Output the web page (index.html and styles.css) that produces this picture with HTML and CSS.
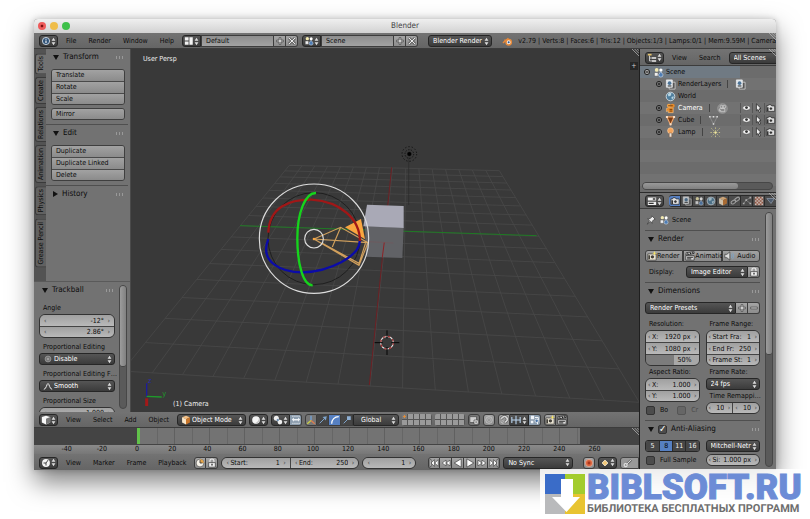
FILE: index.html
```html
<!DOCTYPE html>
<html lang="en">
<head>
<meta charset="utf-8">
<title>Blender</title>
<link rel="stylesheet" href="styles.css">
</head>
<body>
<svg class="sprite" aria-hidden="true">
  <symbol id="updn" viewBox="0 0 6 10"><path fill="#ddd" d="M3 .5 5.3 4H.7zM3 9.500.7 6h4.6z"/></symbol>
  <symbol id="info" viewBox="0 0 12 12"><circle cx="6" cy="6" r="4.300" fill="#2f5277" stroke="#dfe8f0"/><path stroke="#fff" stroke-width="1.300" d="M6 5.300v3.200M6 3.200v1.200"/></symbol>
  <symbol id="layout" viewBox="0 0 12 12"><path fill="#f2f2f2" d="M1 1.500h4.500v4H1zM1 6.500h4.500v4H1zM6.500 1.500h4v9h-4z"/></symbol>
  <symbol id="scene" viewBox="0 0 12 12"><path fill="#eee" stroke="#444" stroke-width=".5" d="M1.500 6h4v4h-4z"/><circle cx="4" cy="3.200" r="2" fill="#f1e8b0"/><circle cx="8.600" cy="3.300" r="1.800" fill="#fff"/><path fill="#4e7db5" stroke="#dce6f0" stroke-width=".6" d="M8.500 5 11 8.500a2.500 2.500 0 1 1-5 0z"/></symbol>
  <symbol id="plus" viewBox="0 0 12 12"><path fill="#eee" stroke="#333" stroke-width=".8" d="M5 2h2v3h3v2H7v3H5V7H2V5h3z"/></symbol>
  <symbol id="minus" viewBox="0 0 12 12"><path fill="#eee" stroke="#333" stroke-width=".8" d="M2 5h8v2H2z"/></symbol>
  <symbol id="cross" viewBox="0 0 12 12"><path fill="none" stroke="#333" stroke-width="3" d="m2.500 2.500 7 7m0-7-7 7"/><path stroke="#f2f2f2" stroke-width="1.400" d="m2.500 2.500 7 7m0-7-7 7"/></symbol>
  <symbol id="blender" viewBox="0 0 12 12"><path fill="none" stroke="#e88a3a" stroke-width="1.500" d="M1 7.500 7 2.500M2.500 4.500h5"/><circle cx="7.300" cy="6.800" r="2.900" fill="#f6f0ea" stroke="#e88a3a" stroke-width="1.600"/><circle cx="7.300" cy="6.800" r="1.100" fill="#2b5a94"/></symbol>
  <symbol id="tree" viewBox="0 0 12 12"><path fill="none" stroke="#ddd" d="M3 3v6.500h3M3 6h3"/><path fill="#e5c26a" d="M1 1h4.500v2H1z"/><path fill="#eee" d="M6 5h5v1.800H6zM6 8.600h5v1.800H6z"/></symbol>
  <symbol id="props" viewBox="0 0 12 12"><path fill="#eee" d="M1 1.800h10v3.700H1zM1 7h10v3.700H1z"/><path fill="#333" d="M7 2.800h3v1.600H7zM2 8h6v1.600H2z"/></symbol>
  <symbol id="layers" viewBox="0 0 12 12"><path fill="#555" stroke="#ddd" stroke-width=".8" d="M4.500 3.500h6.500v7.500H4.500z"/><path fill="#dfe6ec" stroke="#eee" stroke-width=".8" d="M1.500 1h6.500v8H1.500z"/><circle cx="5" cy="4.500" r="2" fill="#4c7396"/><path fill="#333" d="M3 7h4v1.200H3z"/></symbol>
  <symbol id="world" viewBox="0 0 12 12"><circle cx="6" cy="6" r="4.700" fill="#4e7d9c" stroke="#dfe7ec" stroke-width=".9"/><path fill="#b8d5e2" d="M3 4c1-2 3-2 4-1.500L6.500 5 4 6zM7 6.500l2.500-.8c0 2-1 3-2 3.500z"/></symbol>
  <symbol id="ocam" viewBox="0 0 12 12"><path fill="#e58b2c" stroke="#ffd09a" stroke-width=".5" d="M1.500 6 4 5h5v5.500H3.500V8.500L1.500 9.500z"/><circle cx="4.300" cy="3" r="2.200" fill="#f5a548"/><circle cx="8.300" cy="3" r="2.300" fill="#e58b2c"/><path stroke="#7a3d05" d="M5 7h3M5 8.800h3M3.500 3h5"/></symbol>
  <symbol id="dcam" viewBox="0 0 12 12"><circle cx="6" cy="6" r="5.300" fill="#898989" stroke="#aaa" stroke-width=".6"/><path fill="none" stroke="#d5d5d5" stroke-width=".8" d="M2.500 6.500 4 6h4.500v3.500H4V8l-1.500.8z"/><circle cx="5" cy="4" r="1.500" fill="none" stroke="#d5d5d5" stroke-width=".8"/><circle cx="8" cy="4" r="1.500" fill="none" stroke="#d5d5d5" stroke-width=".8"/></symbol>
  <symbol id="omesh" viewBox="0 0 12 12"><path fill="#7b3c14" stroke="#eea56c" stroke-width="1.200" d="M2 2h8L6 10.500z"/><path fill="#fbe0c8" d="M1 1h2.200v2.200H1zM8.800 1H11v2.200H8.800zM5 9h2.200v2.200H5z"/></symbol>
  <symbol id="dmesh" viewBox="0 0 12 12"><path fill="none" stroke="#999" stroke-width=".7" d="M2 2h8L6 10z"/><path fill="#ddd" d="M1.200 1.200h1.600v1.600H1.200zM9.200 1.200h1.600v1.600H9.200zM5.200 9h1.600v1.600H5.200zM5.200 1.200h1.600v1.600H5.200z"/></symbol>
  <symbol id="olamp" viewBox="0 0 12 12"><circle cx="6" cy="4" r="3.200" fill="#f3a45c" stroke="#ffd8b0" stroke-width=".6"/><path fill="#e8e0d8" stroke="#80522c" stroke-width=".5" d="M4.600 6.500h2.800V11H4.600z"/></symbol>
  <symbol id="dlamp" viewBox="0 0 12 12"><path stroke="#d1cb8a" stroke-width=".9" stroke-dasharray="1.500 1.500" d="m1.500 1.500 9 9m0-9-9 9M6 .5v11M.5 6h11"/><circle cx="6" cy="6" r="1.200" fill="#efe6a0"/></symbol>
  <symbol id="eye" viewBox="0 0 12 12"><path fill="#f4f4f4" stroke="#444" stroke-width=".6" d="M1 6c2.500-4 7.500-4 10 0-2.500 3.500-7.500 3.500-10 0z"/><circle cx="6" cy="5.500" r="1.700" fill="#333"/></symbol>
  <symbol id="ptr" viewBox="0 0 12 12"><path fill="#eee" stroke="#222" stroke-width=".9" d="M3.500 1 9 6.500 7 7l1.500 3.500-1.600.7-1.400-3.400-2 1.500z"/></symbol>
  <symbol id="rcam" viewBox="0 0 12 12"><path fill="#ddd" stroke="#222" stroke-width=".8" d="M1 3.500h2l.8-1.500h2.600l.8 1.500H11V10H1z"/><circle cx="6.500" cy="6.700" r="2" fill="#333" stroke="#fff" stroke-width=".7"/><path fill="#333" d="M1.600 5h2v4.500h-2z"/></symbol>
  <symbol id="ycam" viewBox="0 0 12 12"><path fill="#e9e3d2" stroke="#333" stroke-width=".8" d="M1 3.500h10V11H1z"/><circle cx="6.500" cy="7" r="2" fill="#43403a"/><path fill="#43403a" d="M1.600 5h2v5h-2z"/><path fill="#f5e46a" d="m9 0 .8 2 2 .6-2 .8L9 5.500l-.8-2.100-2-.8 2-.6z"/></symbol>
  <symbol id="clap" viewBox="0 0 12 12"><path fill="#ddd" stroke="#222" stroke-width=".8" d="M1 5.500h10V11H1zM1 4.800 1.500 2 11 .8v2z"/><path stroke="#222" stroke-width="1.200" d="m3 2 1 2.500m2-3 1 2.500m2-3 1 2.500M2.500 7.500h7M2.500 9.500h5"/></symbol>
  <symbol id="cube" viewBox="0 0 12 12"><path fill="#f3c086" d="m6 .8 4.700 2L6 5 1.300 2.800z"/><path fill="#fae6c8" d="M6 5v6.300L1.300 9V2.800z"/><path fill="#c9762b" d="M6 5v6.300L10.700 9V2.800z"/></symbol>
  <symbol id="wcube" viewBox="0 0 12 12"><path fill="#f8f8f8" d="M1 2.500 6 1l5 1.500V9l-5 2.500L1 9z"/><path fill="#777" d="M6 4.500 11 2.500V9l-5 2.500z"/></symbol>
  <symbol id="link" viewBox="0 0 12 12"><g fill="none" stroke="#bbb" stroke-width="1.300"><rect x="1" y="5.500" width="6" height="3.500" rx="1.700" transform="rotate(-35 4 7)"/><rect x="5.500" y="2.500" width="6" height="3.500" rx="1.700" transform="rotate(-35 8 4)"/></g></symbol>
  <symbol id="geo" viewBox="0 0 12 12"><path fill="none" stroke="#999" d="m2 9 3-4 5-3M5 5l5 4"/><path fill="#ccc" d="M1 8h2v2H1zM4 4h2v2H4zM9 1h2v2H9zM9 8h2v2H9z"/></symbol>
  <symbol id="check" viewBox="0 0 12 12"><path fill="#f1ddd3" d="M1 1h10v10H1z"/><path fill="#a75a43" d="M3 1h2v2H3zm4 0h2v2H7zM1 3h2v2H1zm4 0h2v2H5zm4 0h2v2H9zM3 5h2v2H3zm4 0h2v2H7zM1 7h2v2H1zm4 0h2v2H5zm4 0h2v2H9zM3 9h2v2H3zm4 0h2v2H7z"/></symbol>
  <symbol id="tria" viewBox="0 0 12 12"><path fill="#50627a" stroke="#aebdd0" stroke-width=".8" d="M1 3h9L6 9z"/></symbol>
  <symbol id="pin" viewBox="0 0 12 12"><path fill="#eee" stroke="#333" stroke-width=".8" d="m7 1 4 4-1.500.5-2 2V10L5.300 7.800 1.500 11 4.300 6.800 2 4.500h2.800l2-2z"/></symbol>
  <symbol id="spk" viewBox="0 0 12 12"><path fill="#ddd" stroke="#333" stroke-width=".8" d="M1 4h2.500L7 1v10L3.500 8H1z"/><path fill="none" stroke="#7ea3c4" stroke-width="1.100" d="M8.500 3.500c1.500 1.500 1.500 3.500 0 5M10 2c2.200 2.500 2.200 5.500 0 8"/></symbol>
  <symbol id="lock" viewBox="0 0 12 12"><path fill="none" stroke="#eee" stroke-width="1.300" d="M3.500 6V3.500a2.400 2.400 0 0 1 4.800 0V6"/><path fill="#eee" stroke="#333" stroke-width=".8" d="M2 5.500h8V11H2z"/><path fill="#555" d="M5 7h2v2H5z"/></symbol>
  <symbol id="ball" viewBox="0 0 12 12"><circle cx="6" cy="6" r="4.600" fill="#f6f6f6"/><path fill="#c3c3c3" d="M9.500 3.500a4.500 4.500 0 0 1-6 6.300C7 9.500 9.500 7 9.500 3.500z"/></symbol>
  <symbol id="pivot" viewBox="0 0 12 12"><circle cx="4" cy="3.800" r="3" fill="#eee"/><circle cx="8.300" cy="8.500" r="2.800" fill="#eee"/><circle cx="5.800" cy="6" r="1.500" fill="#47729c" stroke="#fff" stroke-width=".5"/></symbol>
  <symbol id="cent" viewBox="0 0 12 12"><path fill="#eef2f6" d="M1 5.500 3.500 3v1.700h5V3L11 5.500 8.500 8V6.500h-5V8z"/><path fill="none" stroke="#eef2f6" stroke-dasharray="1.500 1" d="M1.500 1.500h9M1.500 10h9"/></symbol>
  <symbol id="axes" viewBox="0 0 12 12"><path stroke="#74a6dd" stroke-width="1.500" d="M6 6.500V1"/><path stroke="#c8cf45" stroke-width="1.500" d="M6 6.500 1.500 10.500"/><path stroke="#df7d4e" stroke-width="1.500" d="m6 6.500 4.500 4"/></symbol>
  <symbol id="marr" viewBox="0 0 12 12"><path stroke="#7fa5cc" stroke-width="1.200" d="m2 10 6-6"/><path fill="#7fa5cc" d="m10.500 1.500-1 5-4-4z"/></symbol>
  <symbol id="marc" viewBox="0 0 12 12"><path fill="none" stroke="#fff" stroke-width="1.500" d="M2 10.500C2 5.500 5.500 2 10.500 2"/></symbol>
  <symbol id="mscl" viewBox="0 0 12 12"><path stroke="#7fa5cc" stroke-width="1.200" d="m2 10 6-6"/><path fill="#8fb0d4" d="M6 1.500h4.500V6H6z"/></symbol>
  <symbol id="lcam" viewBox="0 0 12 12"><path fill="#cfcfcf" stroke="#444" stroke-width=".8" d="M1 2h8v7H1z"/><path fill="#eee" stroke="#444" stroke-width=".8" d="M6 6h5v5H6z"/><circle cx="8.500" cy="8.500" r="1" fill="#555"/></symbol>
  <symbol id="ring" viewBox="0 0 12 12"><circle cx="6" cy="6" r="4" fill="none" stroke="#c4c4c4"/><circle cx="6" cy="6" r="2" fill="none" stroke="#b0b0b0"/></symbol>
  <symbol id="rdot" viewBox="0 0 12 12"><circle cx="6" cy="6" r="3.500" fill="#777" stroke="#999"/><circle cx="6" cy="6" r="1.200" fill="#aaa"/></symbol>
  <symbol id="mag" viewBox="0 0 12 12"><path fill="none" stroke="#555" stroke-width="3.400" d="m2.500 4.500 1.800-1.700a3.200 3.200 0 0 1 4.600 4.600L7.200 9"/><path fill="none" stroke="#d5d5d5" stroke-width="2" d="m2.500 4.500 1.800-1.700a3.200 3.200 0 0 1 4.600 4.600L7.200 9"/><path stroke="#ddd" d="m2.500 8 2.500 2.500M4.500 6.500 6 8"/></symbol>
  <symbol id="incr" viewBox="0 0 12 12"><path stroke="#b9d4ee" stroke-width="1.300" d="M1 2.500v7m5-8.500v10m5-8.500v7M1 6h10"/></symbol>
  <symbol id="snap" viewBox="0 0 12 12"><path fill="#f0f4f8" d="M1 1h4v4H1zM1 7h3v3H1z"/><path fill="none" stroke="#f0f4f8" stroke-width="1.200" d="M6 3h4v3M9 7v4"/><circle cx="8" cy="7" r="2" fill="#4772a6" stroke="#fff" stroke-width=".8"/></symbol>
  <symbol id="clock" viewBox="0 0 12 12"><circle cx="6" cy="6" r="4.700" fill="#f4f4f4"/><path fill="none" stroke="#333" stroke-width="1.100" d="M8.500 2.500 6 6v3M3 6h3"/></symbol>
  <symbol id="range" viewBox="0 0 12 12"><circle cx="6" cy="6" r="4.700" fill="#f6f2e8" stroke="#444" stroke-width=".8"/><path fill="#e7a64a" d="M6 6V1.500A4.500 4.500 0 0 1 10.500 6z"/><path fill="none" stroke="#333" d="M6 2.500V6h3"/></symbol>
  <symbol id="first" viewBox="0 0 12 12"><path fill="#fff" stroke="#333" stroke-width=".7" d="M1 2h1.500v8H1zM6.500 2v8l-4-4zM11 2v8L7 6z"/></symbol>
  <symbol id="rew" viewBox="0 0 12 12"><path fill="#fff" stroke="#333" stroke-width=".7" d="M6 2.500v7L1.500 6zM10.800 2.500v7L6.300 6z"/></symbol>
  <symbol id="back" viewBox="0 0 12 12"><path fill="#fff" stroke="#333" stroke-width=".8" d="M9.800 1v10L1.500 6z"/></symbol>
  <symbol id="dot" viewBox="0 0 12 12"><circle cx="6" cy="6" r="4.300" fill="#d9623c" stroke="#efb49f" stroke-width=".8"/><circle cx="6" cy="6" r="1.700" fill="#a8331a"/></symbol>
  <symbol id="dia" viewBox="0 0 12 12"><path fill="#f0c779" stroke="#fff5df" stroke-width=".9" d="m6 2.500 3.500 3.500L6 9.500 2.500 6z"/></symbol>
  <symbol id="key" viewBox="0 0 12 12"><path fill="none" stroke="#444" stroke-width="2.600" d="m4 8 6-6"/><path stroke="#ddd" stroke-width="1.300" d="m4 8 6-6"/><circle cx="3.200" cy="8.500" r="1.900" fill="none" stroke="#e8e8e8" stroke-width="1.300"/></symbol>
  <symbol id="smooth" viewBox="0 0 12 12"><path fill="none" stroke="#eee" stroke-width="1.200" d="M1 10c3 0 3.500-7 5-7s2 7 5 7"/></symbol>
  <symbol id="exp" viewBox="0 0 8 8"><circle cx="4" cy="4" r="2.600" fill="#8d8d8d" stroke="#222"/><path stroke="#111" stroke-width=".9" d="M2.500 4h3M4 2.500v3"/></symbol>
  <symbol id="col" viewBox="0 0 8 8"><circle cx="4" cy="4" r="2.600" fill="#aaa" stroke="#222"/><path stroke="#111" d="M2.500 4h3"/></symbol>
  <symbol id="grip" viewBox="0 0 8 8"><path stroke="#bbb" stroke-width=".8" d="m0 0 8 8M3 0l5 5M6 0l2 2"/></symbol>
</svg>

<main class="window">
  <div class="titlebar">
    <div class="lights"><span class="l red"></span><span class="l yellow"></span><span class="l green"></span></div>
    <h1>Blender</h1>
  </div>

  <header class="bar info">
    <button class="type" aria-label="Editor type"><svg><use href="#info"/></svg><svg class="ud"><use href="#updn"/></svg></button>
    <nav class="menu"><a href="#">File</a><a href="#">Render</a><a href="#">Window</a><a href="#">Help</a></nav>
    <div class="group idb">
      <button class="type" aria-label="Screen layout"><svg><use href="#layout"/></svg><svg class="ud"><use href="#updn"/></svg></button>
      <input class="name" aria-label="Layout name" value="Default">
      <button class="sq" aria-label="Add layout"><svg><use href="#plus"/></svg></button>
      <button class="sq" aria-label="Delete layout"><svg><use href="#cross"/></svg></button>
    </div>
    <div class="group idb">
      <button class="type" aria-label="Scene"><svg><use href="#scene"/></svg><svg class="ud"><use href="#updn"/></svg></button>
      <input class="name" aria-label="Scene name" value="Scene">
      <button class="sq" aria-label="Add scene"><svg><use href="#plus"/></svg></button>
      <button class="sq" aria-label="Delete scene"><svg><use href="#cross"/></svg></button>
    </div>
    <label class="dd engine"><select aria-label="Render engine"><option>Blender Render</option></select><svg class="ud"><use href="#updn"/></svg></label>
    <svg class="logo"><use href="#blender"/></svg>
    <p class="stats">v2.79 | Verts:8 | Faces:6 | Tris:12 | Objects:1/3 | Lamps:0/1 | Mem:9.59M | Camera</p>
    <svg class="corner"><use href="#grip"/></svg>
  </header>

  <div class="work">
    <div class="left">
      <section class="view3d">
        <aside class="shelf">
          <div class="tools">
            <div class="tabs" role="tablist">
              <button class="on" role="tab">Tools</button><button role="tab">Create</button><button role="tab">Relations</button><button role="tab">Animation</button><button role="tab">Physics</button><button role="tab">Grease Pencil</button>
            </div>
            <div class="panels">
              <section class="panel"><h2>Transform</h2>
                <div class="stack"><button>Translate</button><button>Rotate</button><button>Scale</button></div>
                <div class="stack"><button>Mirror</button></div>
              </section>
              <section class="panel"><h2>Edit</h2>
                <div class="stack"><button>Duplicate</button><button>Duplicate Linked</button><button>Delete</button></div>
              </section>
              <section class="panel"><h2 class="closed">History</h2></section>
            </div>
          </div>
          <div class="operator">
            <section class="opbody"><h2>Trackball</h2>
              <div class="opfields">
                <span class="lab">Angle</span>
                <div class="nums"><label class="num"><input aria-label="Angle X" value="-12°"></label><label class="num"><input aria-label="Angle Y" value="2.86°"></label></div>
                <label class="lab" for="pe">Proportional Editing</label>
                <div class="dd"><svg><use href="#rdot"/></svg><select id="pe"><option>Disable</option></select><svg class="ud"><use href="#updn"/></svg></div>
                <label class="lab" for="pf">Proportional Editing F…</label>
                <div class="dd"><svg><use href="#smooth"/></svg><select id="pf"><option>Smooth</option></select><svg class="ud"><use href="#updn"/></svg></div>
                <label class="lab" for="ps">Proportional Size</label>
                <div class="nums"><div class="num"><input id="ps" value="1.000"></div></div>
              </div>
            </section>
            <div class="vscroll"><span></span></div>
          </div>
        </aside>
        <div class="viewport">
          <svg class="scene3d" viewBox="3 -303 1524 1089" preserveAspectRatio="xMidYMid slice" aria-label="3D scene">
            <g id="grid" fill="none" stroke="#484848" stroke-width="2.500"></g>
            <path stroke="#1f7a24" stroke-width="3" d="M330 227 1220 257"/>
            <path stroke="#6d2024" stroke-width="3" d="M785 52 718 705"/>
            <path stroke="#2b2b2b" stroke-width="2" d="M836 22V165"/>
            <g fill="none" stroke="#0c0c0c"><circle cx="838" cy="12" r="6" fill="#000"/><circle cx="838" cy="12" r="13" stroke-width="2.500" stroke-dasharray="4 4"/><circle cx="838" cy="12" r="22" stroke-width="2.500" stroke-dasharray="4 6"/></g>
            <path fill="#616266" d="M705 228 821 233 817 324 708 320z"/>
            <path fill="#a9a9b6" d="M711 164 821 168 821 234 700 229z"/>
            <path stroke="#8e2226" stroke-width="3" d="M763 276 757 321"/><path stroke="#72565a" stroke-width="2" d="M715 275 790 279"/>
            <circle cx="552" cy="266" r="138" fill="none" stroke="#191919" stroke-width="2.500"/>
            <path fill="#f9a640" d="M645 232 693 207 705 268z"/>
            <g fill="none" stroke="#d2a05c" stroke-width="3.500"><path d="M552 267 632 232 714 278 687 346zM552 267 714 278M632 232 607 291M577 280 687 340 708 275"/></g>
            <g fill="none" stroke-width="7">
              <path stroke="#a01717" d="M415 248C418 170 480 148 545 149 630 155 690 205 690 275"/>
              <path stroke="#0b0ba8" d="M415 267C386 340 460 368 520 367 600 364 690 318 689 273"/>
              <path stroke="#16d41c" d="M558 129C525 128 502 190 502 265 502 345 520 406 548 406"/>
            </g>
            <g fill="none" stroke="#dcdcdc" stroke-width="3.500"><circle cx="552" cy="266" r="164"/><circle cx="552" cy="266" r="28"/></g>
            <circle cx="552" cy="267" r="4" fill="#f9a640"/>
            <circle cx="771" cy="578" r="19" fill="none" stroke="#eee" stroke-width="3.500"/>
            <circle cx="771" cy="578" r="19" fill="none" stroke="#a02a2a" stroke-width="3.500" stroke-dasharray="7.500 7.500"/>
            <path stroke="#050505" stroke-width="3" d="M771 541v24M771 591v24M734 578h24M784 578h24"/>
            <g fill="none" stroke-width="4"><path stroke="#1c1c9c" d="M50 740V700"/><path stroke="#1f9a2b" d="M50 739 95 741"/><path stroke="#a31919" stroke-width="9" d="M50 745v23"/></g>
            <text class="ax z" x="54" y="698">z</text><text class="ax y" x="97" y="739">y</text>
          </svg>
          <span>User Persp</span>
          <span class="active">(1) Camera</span>
          <button class="expand" aria-label="Show properties">+</button>
          <svg class="corner"><use href="#grip"/></svg>
        </div>
      </section>

      <div class="bar vhead">
        <button class="type" aria-label="Editor type"><svg><use href="#wcube"/></svg><svg class="ud"><use href="#updn"/></svg></button>
        <nav class="menu"><a href="#">View</a><a href="#">Select</a><a href="#">Add</a><a href="#">Object</a></nav>
        <div class="dd mode"><svg><use href="#cube"/></svg><select aria-label="Mode"><option>Object Mode</option></select><svg class="ud"><use href="#updn"/></svg></div>
        <button class="type" aria-label="Viewport shading"><svg><use href="#ball"/></svg><svg class="ud"><use href="#updn"/></svg></button>
        <div class="group"><button class="type" aria-label="Pivot"><svg><use href="#pivot"/></svg><svg class="ud"><use href="#updn"/></svg></button><button class="sq blueish" aria-label="Centers only"><svg><use href="#cent"/></svg></button></div>
        <div class="group">
          <button class="sq mid" aria-label="Manipulator"><svg><use href="#axes"/></svg></button><button class="sq dark" aria-label="Translate"><svg><use href="#marr"/></svg></button><button class="sq blue" aria-label="Rotate"><svg><use href="#marc"/></svg></button><button class="sq dark" aria-label="Scale"><svg><use href="#mscl"/></svg></button>
          <label class="dd orient"><select aria-label="Orientation"><option>Global</option></select><svg class="ud"><use href="#updn"/></svg></label>
        </div>
        <div class="layers"><i class="used"></i><i></i><i></i><i></i><i></i><i></i><i></i><i></i><i></i><i></i></div>
        <div class="layers"><i></i><i></i><i></i><i></i><i></i><i></i><i></i><i></i><i></i><i></i></div>
        <button class="sq mid lone" aria-label="Lock camera"><svg><use href="#lcam"/></svg></button>
        <button class="sq lone" aria-label="Proportional edit"><svg><use href="#ring"/></svg></button>
        <div class="group"><button class="sq" aria-label="Snap"><svg><use href="#mag"/></svg></button><button class="type" aria-label="Snap element"><svg><use href="#incr"/></svg><svg class="ud"><use href="#updn"/></svg></button><button class="sq blueish" aria-label="Snap self"><svg><use href="#snap"/></svg></button></div>
        <div class="group"><button class="sq" aria-label="Render image"><svg><use href="#ycam"/></svg></button><button class="sq mid" aria-label="Render animation"><svg><use href="#clap"/></svg></button></div>
      </div>

      <section class="timeline">
        <div class="track"><span class="before"></span><span class="frames"></span><span class="after"></span><svg class="corner"><use href="#grip"/></svg></div>
        <div class="scale"><span>-40</span><span>-20</span><span>0</span><span>20</span><span>40</span><span>60</span><span>80</span><span>100</span><span>120</span><span>140</span><span>160</span><span>180</span><span>200</span><span>220</span><span>240</span><span>260</span></div>
      </section>

      <div class="bar thead">
        <button class="type" aria-label="Editor type"><svg><use href="#clock"/></svg><svg class="ud"><use href="#updn"/></svg></button>
        <nav class="menu"><a href="#">View</a><a href="#">Marker</a><a href="#">Frame</a><a href="#">Playback</a></nav>
        <div class="group"><button class="sq" aria-label="Preview range"><svg><use href="#range"/></svg></button><button class="sq" aria-label="Lock time"><svg><use href="#lock"/></svg></button></div>
        <div class="hnums"><label class="num"><span>Start:</span><input value="1"></label><label class="num"><span>End:</span><input value="250"></label></div>
        <div class="hnums cur"><label class="num"><input aria-label="Current frame" value="1"></label></div>
        <div class="group play">
          <button class="sq" aria-label="First frame"><svg><use href="#first"/></svg></button><button class="sq" aria-label="Previous key"><svg><use href="#rew"/></svg></button><button class="sq" aria-label="Play reversed"><svg><use href="#back"/></svg></button><button class="sq" aria-label="Play"><svg class="flip"><use href="#back"/></svg></button><button class="sq" aria-label="Next key"><svg class="flip"><use href="#rew"/></svg></button><button class="sq" aria-label="Last frame"><svg class="flip"><use href="#first"/></svg></button>
        </div>
        <label class="dd sync"><select aria-label="Sync mode"><option>No Sync</option></select><svg class="ud"><use href="#updn"/></svg></label>
        <button class="sq lone rec" aria-label="Auto keyframe"><svg><use href="#dot"/></svg></button>
        <button class="type" aria-label="Keyframe type"><svg><use href="#dia"/></svg><svg class="ud"><use href="#updn"/></svg></button>
        <button class="keying" aria-label="Keying set"><svg><use href="#key"/></svg></button>
      </div>
    </div>

    <div class="right">
      <div class="bar ohead">
        <button class="type" aria-label="Editor type"><svg><use href="#tree"/></svg><svg class="ud"><use href="#updn"/></svg></button>
        <nav class="menu"><a href="#">View</a><a href="#">Search</a></nav>
        <label class="dd scenes"><select aria-label="Display mode"><option>All Scenes</option></select></label>
        <svg class="corner"><use href="#grip"/></svg>
      </div>
      <section class="outliner">
        <ul>
          <li class="sel"><div class="node"><svg class="ex"><use href="#col"/></svg><svg><use href="#scene"/></svg><span>Scene</span></div></li>
          <li><div class="node child"><svg class="ex"><use href="#exp"/></svg><svg><use href="#layers"/></svg><span>RenderLayers</span><b></b><svg><use href="#layers"/></svg></div></li>
          <li><div class="node child"><svg class="ex"></svg><svg><use href="#world"/></svg><span>World</span></div></li>
          <li><div class="node child act"><svg class="ex"><use href="#exp"/></svg><svg><use href="#ocam"/></svg><span>Camera</span><b></b><svg><use href="#dcam"/></svg></div><svg class="t"><use href="#eye"/></svg><svg class="t"><use href="#ptr"/></svg><svg class="t"><use href="#rcam"/></svg></li>
          <li><div class="node child"><svg class="ex"><use href="#exp"/></svg><svg><use href="#omesh"/></svg><span>Cube</span><b></b><svg><use href="#dmesh"/></svg></div><svg class="t"><use href="#eye"/></svg><svg class="t"><use href="#ptr"/></svg><svg class="t"><use href="#rcam"/></svg></li>
          <li><div class="node child"><svg class="ex"><use href="#exp"/></svg><svg><use href="#olamp"/></svg><span>Lamp</span><b></b><svg><use href="#dlamp"/></svg></div><svg class="t"><use href="#eye"/></svg><svg class="t"><use href="#ptr"/></svg><svg class="t"><use href="#rcam"/></svg></li>
        </ul>
        <div class="hscroll"><span></span></div>
      </section>
      <div class="bar phead">
        <button class="type" aria-label="Editor type"><svg><use href="#props"/></svg><svg class="ud"><use href="#updn"/></svg></button>
        <div class="ctx"><button class="on" aria-label="Render"><svg><use href="#rcam"/></svg></button><button aria-label="Render layers"><svg><use href="#layers"/></svg></button><button aria-label="Scene"><svg><use href="#scene"/></svg></button><button aria-label="World"><svg><use href="#world"/></svg></button><button aria-label="Object"><svg><use href="#cube"/></svg></button><button aria-label="Constraints"><svg><use href="#link"/></svg></button><button aria-label="Data"><svg><use href="#geo"/></svg></button><button aria-label="Texture"><svg><use href="#check"/></svg></button><button aria-label="Particles"><svg><use href="#tria"/></svg></button></div>
        <svg class="corner"><use href="#grip"/></svg>
      </div>
      <section class="props">
        <div class="pbody">
          <div class="crumb"><svg><use href="#pin"/></svg><svg><use href="#scene"/></svg><span>Scene</span></div>
          <section class="ppanel"><h2>Render</h2>
            <div class="group triple"><button><svg><use href="#ycam"/></svg>Render</button><button><svg><use href="#clap"/></svg>Animatio</button><button><svg><use href="#spk"/></svg><span>Audio</span></button></div>
            <div class="row"><label class="lab" for="disp">Display:</label><div class="group"><div class="dd"><select id="disp"><option>Image Editor</option></select><svg class="ud"><use href="#updn"/></svg></div><button class="sq" aria-label="Lock interface"><svg><use href="#lock"/></svg></button></div></div>
          </section>
          <section class="ppanel"><h2>Dimensions</h2>
            <div class="group presets"><label class="dd"><select aria-label="Render presets"><option>Render Presets</option></select><svg class="ud"><use href="#updn"/></svg></label><button class="sq" aria-label="Add preset"><svg><use href="#plus"/></svg></button><button class="sq" aria-label="Remove preset"><svg><use href="#minus"/></svg></button></div>
            <div class="cols">
              <div class="col">
                <span class="lab">Resolution:</span>
                <div class="nums"><label class="num"><span>X:</span><input value="1920 px"></label><label class="num"><span>Y:</span><input value="1080 px"></label><label class="num pct"><input aria-label="Percentage" value="50%"></label></div>
                <span class="lab">Aspect Ratio:</span>
                <div class="nums"><label class="num"><span>X:</span><input value="1.000"></label><label class="num"><span>Y:</span><input value="1.000"></label></div>
                <div class="checks"><label><input type="checkbox">Bo</label><label class="off"><input type="checkbox" disabled>Cr</label></div>
              </div>
              <div class="col">
                <span class="lab">Frame Range:</span>
                <div class="nums"><label class="num"><span>Start Fra:</span><input value="1"></label><label class="num"><span>End Fr:</span><input value="250"></label><label class="num"><span>Frame St:</span><input value="1"></label></div>
                <label class="lab" for="fps">Frame Rate:</label>
                <div class="dd"><select id="fps"><option>24 fps</option></select><svg class="ud"><use href="#updn"/></svg></div>
                <span class="lab">Time Remappi…</span>
                <div class="hnums"><label class="num"><input aria-label="Old" value="10"></label><label class="num"><input aria-label="New" value="10"></label></div>
              </div>
            </div>
          </section>
          <section class="ppanel"><h2><label><input type="checkbox" checked>Anti-Aliasing</label></h2>
            <div class="cols">
              <div class="col gap"><div class="samples"><button>5</button><button class="on">8</button><button>11</button><button>16</button></div><div class="checks"><label><input type="checkbox">Full Sample</label></div></div>
              <div class="col gap"><label class="dd"><select aria-label="Filter"><option>Mitchell-Netr</option></select><svg class="ud"><use href="#updn"/></svg></label><div class="hnums"><label class="num"><span>Si:</span><input value="1.000 px"></label></div></div>
            </div>
          </section>
        </div>
        <div class="vscroll tall"><span></span></div>
      </section>
    </div>
  </div>
</main>

<a class="brand" href="#">
  <svg viewBox="0 0 40 40" aria-hidden="true"><path fill="#3a6cc8" d="M0 0h20v20H0z"/><path fill="#a3cc2e" d="M20 0h20v20H20z"/><path fill="#b9babc" d="M0 20h20v20H0z"/><path fill="#e8c431" d="M20 20h20v20H20z"/><path fill="#fff" d="M16 5h12v18h7L21.500 38 7 23h9z"/></svg>
  <span class="words"><strong>BIBLSOFT.RU</strong><em>БИБЛИОТЕКА БЕСПЛАТНЫХ ПРОГРАММ</em></span>
</a>
<script src="grid.js"></script>
</body>
</html>
```
FILE: styles.css
```css
* { box-sizing: border-box; margin: 0; padding: 0; }
html, body { height: 100%; }
body {
  background: #fff;
  padding: 19px 34px 49px;
  overflow: hidden;
  font-family: "DejaVu Sans Condensed", "DejaVu Sans", sans-serif;
  font-size: 7px;
  line-height: 12px;
  text-rendering: geometricPrecision;
  color: #0c0c0c;
}
button, input, select { font: inherit; color: inherit; border: 0; border-radius: 0; background: none; appearance: none; min-width: 0; outline: 0; text-rendering: inherit; }
a { color: inherit; text-decoration: none; }
ul { list-style: none; }
svg { display: block; flex: none; width: 10px; height: 10px; }
.sprite { position: absolute; width: 0; height: 0; }
span, p, a, h2, label { white-space: nowrap; }

.window {
  height: 100%;
  display: flex;
  flex-direction: column;
  border-radius: 4px 4px 0 0;
  background: #727272;
  box-shadow: 0 12px 26px rgba(0, 0, 0, .5), 0 0 6px rgba(0, 0, 0, .2);
}
.titlebar {
  display: grid;
  grid-template-columns: 1fr auto 1fr;
  align-items: center;
  height: 14px;
  padding: 0 4px;
  border-radius: 4px 4px 0 0;
  background: linear-gradient(#efefef, #d2d2d2);
}
.titlebar h1 { font-size: 8px; font-weight: 400; color: #444; }
.lights { display: flex; gap: 4px; }
.l { width: 8px; height: 8px; border-radius: 50%; }
.red { background: radial-gradient(#7a1010 0 20%, #ee5a5a 30%); }
.yellow { background: #efbd4a; }
.green { background: #3ec04a; }

.bar {
  position: relative;
  flex: none;
  display: flex;
  align-items: center;
  height: 16px;
  padding: 1px 0 0 5px;
  background: linear-gradient(#737373, #656565);
  border-bottom: 1px solid #3c3c3c;
  overflow: hidden;
}
.menu { display: flex; gap: 12px; margin: 0 8px; }
.corner { position: absolute; top: 0; right: 0; width: 7px; height: 7px; }

.type {
  flex: none;
  display: flex;
  align-items: center;
  justify-content: space-between;
  width: 19px;
  height: 12px;
  padding: 0 1px;
  border: 1px solid #262626;
  border-radius: 3px;
  background: linear-gradient(#555, #3b3b3b);
}
.type svg, .dd svg { width: 10px; height: 10px; }
.type .ud, .dd .ud { width: 5px; height: 9px; }
.sq {
  flex: none;
  display: grid;
  place-items: center;
  width: 12px;
  height: 12px;
  border: 1px solid #3d3d3d;
  background: linear-gradient(#a5a5a5, #8d8d8d);
}
.sq svg { width: 10px; height: 10px; }
.sq.mid { background: #777; }
.sq.dark { background: #454545; }
.sq.blue { background: #5680c2; }
.sq.blueish { background: #8c9dae; }
.lone { border-radius: 3px; }
.group { display: flex; }
.group > * { border-radius: 0; }
.group > * + * { border-left-width: 0; }
.group > :first-child { border-radius: 3px 0 0 3px; }
.group > :last-child { border-radius: 0 3px 3px 0; }

.dd {
  display: flex;
  align-items: center;
  height: 12px;
  padding: 0 2px 0 3px;
  border: 1px solid #262626;
  border-radius: 3px;
  background: linear-gradient(#555, #3b3b3b);
  color: #fff;
}
.dd select { flex: 1; width: 0; height: 10px; line-height: 10px; padding-left: 1px; }
.dd option { color: #111; }

.num {
  flex: 1;
  display: flex;
  align-items: center;
  height: 12px;
  padding: 0 4px;
  background: linear-gradient(#a0a0a0, #b9b9b9);
}
.num::before, .num::after { content: "‹"; color: #444; width: 4px; flex: none; }
.num::after { content: "›"; text-align: right; }
.num input { flex: 1; width: 0; height: 10px; text-align: right; padding: 0 2px; }
.nums { display: flex; flex-direction: column; border: 1px solid #333; border-radius: 6px; overflow: hidden; }
.nums .num { flex: none; }
.nums .num:first-child, .nums .num:last-child { height: 11px; }
.nums .num:only-child { height: 10px; }
.num + .num { border-top: 1px solid #444; }
.hnums { display: flex; height: 12px; border: 1px solid #333; border-radius: 6px; overflow: hidden; }
.hnums .num { height: 10px; }
.hnums .num + .num { border-top: 0; border-left: 1px solid #444; }

.info .idb { margin-right: 4px; }
.name { width: 73px; height: 12px; padding-left: 4px; border: 1px solid #3d3d3d; background: linear-gradient(#8e8e8e, #a2a2a2); }
.engine { width: 68px; margin: 0 10px 0 6px; }
.logo { width: 11px; height: 11px; margin-right: 5px; }
.stats { flex: 1; }

.work { flex: 1; min-height: 0; display: grid; grid-template-columns: minmax(0, 1fr) 137px; }
.left, .right { display: flex; flex-direction: column; min-height: 0; }
.right { border-left: 1px solid #1f1f1f; min-width: 0; }

.view3d { flex: 1; min-height: 0; display: grid; grid-template-columns: 97px 1fr; }
.shelf { display: flex; flex-direction: column; min-height: 0; border-right: 1px solid #4a4a4a; }
.tools { flex: 1; min-height: 0; display: flex; }
.tabs { width: 12px; background: #535353; padding: 4px 0 0 1px; display: flex; flex-direction: column; gap: 3px; overflow: hidden; }
.tabs button {
  writing-mode: vertical-rl;
  transform: rotate(180deg);
  width: 11px;
  padding: 2px 0;
  line-height: 10px;
  border: 1px solid #3a3a3a;
  border-left: 0;
  border-radius: 0 3px 3px 0;
  background: #616161;
  white-space: nowrap;
}
.tabs .on { background: #727272; }
.panels { flex: 1; min-width: 0; }
h2 { position: relative; display: flex; align-items: center; height: 16px; font-size: 8px; font-weight: 400; gap: 4px; }
h2::before { content: ""; border: 3px solid transparent; border-top: 5px solid #111; border-bottom: 0; }
h2.closed::before { border: 3px solid transparent; border-left: 5px solid #111; border-right: 0; }
h2::after { content: ""; width: 8px; height: 3px; margin-left: auto; background: repeating-linear-gradient(90deg, #999 0 1px, transparent 1px 3px); }
.panel { padding: 0 3px 4px 5px; border-bottom: 1px solid #4f4f4f; margin: 0 2px 0 0; }
.panel:last-child { border: 0; }
.panel h2 { padding: 0 1px 0 2px; margin-bottom: 4px; }
.stack { display: flex; flex-direction: column; border: 1px solid #3f3f3f; border-radius: 3px; overflow: hidden; }
.stack + .stack { margin-top: 3px; }
.stack button { height: 12px; line-height: 11px; padding-left: 4px; text-align: left; background: linear-gradient(#a2a2a2, #8b8b8b); }
.stack button:first-child, .stack button:last-child { height: 11px; }
.stack button:only-child { height: 10px; line-height: 10px; }
.stack button + button { border-top: 1px solid #4a4a4a; }

.operator { height: 131px; display: flex; border-top: 1px solid #5a5a5a; overflow: hidden; }
.opbody { flex: 1; min-width: 0; padding: 0 4px 0 5px; overflow: hidden; }
.opbody h2 { padding: 0 1px 0 3px; margin-bottom: 4px; }
.opfields { display: flex; flex-direction: column; }
.opfields .lab { padding-left: 4px; }
.opfields .nums, .opfields .dd { margin-bottom: 3px; }
.vscroll { width: 8px; margin: 3px 3px 3px 0; border: 1px solid #474747; border-radius: 4px; background: #5a5a5a; }
.vscroll span { display: block; height: 66%; border-radius: 4px; background: linear-gradient(90deg, #9c9c9c, #808080); border-bottom: 1px solid #444; }
.vscroll.tall span { height: 56%; }

.viewport { position: relative; display: flex; flex-direction: column; justify-content: space-between; padding: 4px 12px 2px; background: #393939; color: #f0f0f0; overflow: hidden; }
.viewport span { position: relative; }
.active { padding-left: 30px; }
.scene3d { position: absolute; inset: 0; width: 100%; height: 100%; }
.ax { font-size: 22px; }
.z { fill: #2a2ab0; }
.y { fill: #1f9a2b; }
.expand { position: absolute; top: 13px; right: 1px; width: 8px; height: 8px; line-height: 8px; background: #262626; color: #ccc; text-align: center; }

.vhead { gap: 3px; }
.vhead .menu, .thead .menu { margin: 0 5px; }
.vhead .mode { width: 69px; }
.vhead .orient { width: 46px; padding-left: 6px; }
.layers { display: grid; grid-template-columns: repeat(5, 6px); border-radius: 2px; overflow: hidden; }
.layers i { height: 6px; border: 1px solid #555; border-width: 0 1px 1px 0; background: #9a9a9a; }
.layers .used { background: radial-gradient(#e08b38 35%, #7a7a7a 40%); }

.track { position: relative; display: flex; height: 16px; background: #737373; }
.before { width: 103px; background: #444; }
.frames { flex: 1; border-left: 3px solid #61c24a; background: repeating-linear-gradient(90deg, transparent 0 17px, #666 17px 18px, transparent 18px 34px, #606060 34px 35px); }
.after { width: 59px; background: #444; }
.scale { display: flex; padding: 0 27px 0 15px; height: 10px; line-height: 9px; background: linear-gradient(#8a8a8a, #777); border-top: 1px solid #444; }
.scale span { flex: 1; text-align: center; }
.thead { height: 16px; gap: 3px; border: 0; }
.thead .hnums { width: 138px; }
.thead .cur { width: 54px; }
.play { margin-left: 9px; }
.flip { transform: scaleX(-1); }
.sync { width: 70px; }
.rec { margin-left: 7px; }
.keying { flex: 1; height: 12px; padding-left: 2px; border: 1px solid #444; border-radius: 3px 0 0 3px; background: #999; }

.ohead { height: 17px; }
.ohead .scenes { flex: 1; margin-right: -4px; }
.outliner {
  position: relative;
  height: 127px;
  display: flex;
  flex-direction: column;
  justify-content: space-between;
  background: repeating-linear-gradient(#6c6c6c 0 12px, #727272 12px 24px);
  border-bottom: 1px solid #2c2c2c;
  overflow: hidden;
}
.outliner li { display: flex; align-items: center; height: 12px; }
.sel { background: linear-gradient(90deg, #707a83 0 100px, transparent 100px); }
.node { flex: 1; min-width: 0; display: flex; align-items: center; gap: 2px; padding-left: 3px; overflow: hidden; margin-right: 1px; }
.node svg { width: 11px; height: 11px; }
.node .ex { width: 8px; height: 8px; }
.node.child { padding-left: 15px; }
.node.child b { width: 1px; height: 8px; margin: 0 5px 0 4px; background: #444; }
.act span { color: #fff; }
.t { width: 12px; height: 10px; border-left: 1px solid #565656; }
.outliner .hscroll { height: 8px; margin: 0 3px 2px 2px; border: 1px solid #474747; border-radius: 4px; background: #5a5a5a; }
.hscroll span { display: block; height: 6px; width: 74%; border-radius: 4px; background: linear-gradient(#999, #808080); }

.ctx { display: flex; margin-left: 5px; }
.ctx button { display: grid; place-items: center; width: 12px; height: 12px; border: 1px solid #2b2b2b; border-left-width: 0; background: #4b4b4b; }
.ctx svg { opacity: .75; }
.ctx .on { background: #5680c2; border-radius: 3px 0 0 3px; }
.ctx .on svg { opacity: 1; }
.props { flex: 1; min-height: 0; display: flex; overflow: hidden; }
.pbody { flex: 1; min-width: 0; padding: 0 4px 0 5px; }
.props .vscroll { margin: 3px 3px 3px 1px; }
.crumb { display: flex; align-items: center; gap: 3px; height: 21px; padding-left: 1px; }
.ppanel { border-top: 1px solid #4f4f4f; padding-bottom: 4px; }
.ppanel h2 { padding-left: 3px; margin-bottom: 3px; }
.ppanel h2 label { display: flex; align-items: center; gap: 4px; }
.triple > button { flex: 1; display: flex; align-items: center; height: 12px; padding-left: 1px; border: 1px solid #3f3f3f; background: linear-gradient(#a2a2a2, #8b8b8b); }
.triple span { flex: 1; }
.row { display: grid; grid-template-columns: 41px 1fr; margin-top: 4px; }
.row .dd, .presets .dd { flex: 1; }
.lab { display: block; padding-left: 4px; }
.cols { display: grid; grid-template-columns: 1fr 1fr; gap: 6px; }
.col { display: flex; flex-direction: column; min-width: 0; }
.presets { margin-bottom: 4px; }
.gap { gap: 2px; }
.col .num { padding: 0 2px; }
.pct { background: linear-gradient(90deg, #7c7c7c 52%, #a8a8a8 52%); }
.pct::before, .pct::after { content: none; }
.num.pct input { padding-right: 5px; }
.checks { display: flex; gap: 9px; padding: 2px 0 0 1px; }
.gap .checks { padding-top: 0; }
.checks label { display: flex; align-items: center; gap: 5px; white-space: nowrap; }
.off { color: #4a4a4a; }
input[type="checkbox"] { flex: none; width: 9px; height: 9px; border: 1px solid #333; border-radius: 2px; background: #4c4c4c; }
input[type="checkbox"]:disabled { background: #666; border-color: #555; }
input[type="checkbox"]:checked::before { content: "✓"; display: block; color: #fff; font-size: 10px; line-height: 7px; font-weight: 700; }
.samples { display: grid; grid-template-columns: repeat(4, 1fr); height: 12px; border: 1px solid #262626; border-radius: 3px; overflow: hidden; }
.samples button { line-height: 10px; background: #474747; color: #eee; }
.samples button + button { border-left: 1px solid #2a2a2a; }
.samples .on { background: #5680c2; color: #000; }

.brand { position: absolute; right: 0; bottom: 0; display: flex; gap: 2px; width: 270px; height: 50px; padding: 5px 4px 0 5px; background: rgba(255, 255, 255, .86); }
.brand svg { width: 40px; height: 40px; }
.words { display: flex; flex-direction: column; }
.brand strong { font: 900 35px/28px Roboto, sans-serif; color: #6c8cd6; -webkit-text-stroke: 1px #6c8cd6; }
.brand em { font: 700 11px/14px Roboto, "Liberation Sans", sans-serif; color: #6e6e6e; }
```
FILE: grid.js
```js
// Projects the 16x16 floor grid onto the viewport plane.
const CELLS = 16;
const M = { a: 593.3, b: -487.5, c: 478, d: 13.95, e: 229.3, f: 46, g: -0.0331, h: -0.5848 };

function project(u, v) {
  const w = M.g * u + M.h * v + 1;
  return [(M.a * u + M.b * v + M.c) / w, (M.d * u + M.e * v + M.f) / w].map(n => n.toFixed(1)).join(" ");
}

let d = "";
for (let i = 0; i <= CELLS; i++) {
  const t = i / CELLS;
  d += `M${project(t, 0)}L${project(t, 1)}M${project(0, t)}L${project(1, t)}`;
}
const path = document.createElementNS("http://www.w3.org/2000/svg", "path");
path.setAttribute("d", d);
document.getElementById("grid").append(path);
```
